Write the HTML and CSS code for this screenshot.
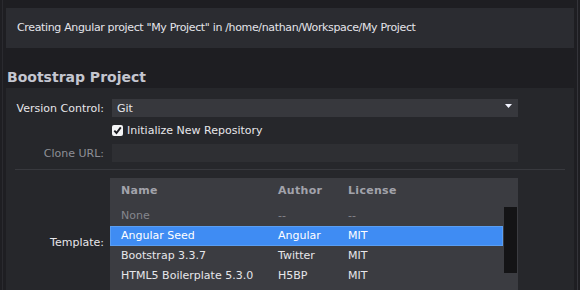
FILE: index.html
```html
<!DOCTYPE html>
<html lang="en">
<head>
    <meta charset="UTF-8">
    <title>New Project</title>
    <link rel="stylesheet" href="styles.css">
</head>
<body>
    <div class="window">
        <div class="banner">Creating Angular project "My Project" in /home/nathan/Workspace/My Project</div>

        <div class="section-title">Bootstrap Project</div>

        <div class="panel">
            <div class="form-row">
                <label class="form-label">Version Control:</label>
                <div class="select">
                    <span>Git</span>
                    <svg class="select-arrow" width="7" height="4" viewBox="0 0 7 4"><path d="M0 0h7L3.5 4z" fill="#f2f4ff"/></svg>
                </div>
            </div>

            <div class="form-row check-row">
                <span></span>
                <label class="check">
                    <svg class="check-box" width="11" height="11" viewBox="0 0 11 11">
                        <rect x="0" y="0" width="11" height="11" rx="2" fill="#f4f4f6"/>
                        <path d="M2.3 5.6l2.2 2.4 4.3-5.6" fill="none" stroke="#1d1d22" stroke-width="1.9"/>
                    </svg>
                    Initialize New Repository
                </label>
            </div>

            <div class="form-row">
                <label class="form-label disabled">Clone URL:</label>
                <div class="input"></div>
            </div>

            <div class="divider"></div>

            <div class="form-row template-row">
                <label class="form-label">Template:</label>
                <div class="table">
                    <div class="table-row table-head">
                        <span>Name</span><span>Author</span><span>License</span>
                    </div>
                    <div class="table-row muted">
                        <span>None</span><span>--</span><span>--</span>
                    </div>
                    <div class="table-row selected">
                        <span>Angular Seed</span><span>Angular</span><span>MIT</span>
                    </div>
                    <div class="table-row">
                        <span>Bootstrap 3.3.7</span><span>Twitter</span><span>MIT</span>
                    </div>
                    <div class="table-row">
                        <span>HTML5 Boilerplate 5.3.0</span><span>H5BP</span><span>MIT</span>
                    </div>
                    <div class="scrollbar"></div>
                </div>
            </div>
        </div>
    </div>
</body>
</html>
```

FILE: styles.css
```css
* {
    margin: 0;
    padding: 0;
    box-sizing: border-box;
}
body {
    background: #1e1e22;
    color: #e6e6ea;
    font-family: 'DejaVu Sans', sans-serif;
    font-size: 11px;
    height: 290px;
    overflow: hidden;
}
.window {
    margin: 0 2px;
    border-left: 1px solid #2a2a2f;
    border-right: 1px solid #34343a;
    height: 100%;
    padding: 8px 3px 0 3px;
}
.banner {
    background: #2b2c31;
    height: 40px;
    line-height: 40px;
    padding-left: 11px;
    color: #e4e4ea;
    letter-spacing: -0.35px;
}
.section-title {
    margin-top: 20px;
    padding-left: 1px;
    font-size: 14px;
    font-weight: bold;
    color: #c4c6d0;
    line-height: 18px;
}
.panel {
    background: #26272b;
    margin-top: 2px;
    padding-top: 11px;
    height: 220px;
}
.form-row {
    display: grid;
    grid-template-columns: 98px 406px;
    column-gap: 8px;
    align-items: center;
    margin-bottom: 7px;
}
.form-label {
    text-align: right;
    color: #e6e6ea;
}
.form-label.disabled {
    color: #8e8f96;
}
.select {
    height: 18px;
    background: #37383d;
    display: flex;
    align-items: center;
    justify-content: space-between;
    padding: 0 6px 0 5px;
}
.select-arrow {
    margin-top: -4px;
}
.check {
    display: flex;
    align-items: center;
    gap: 4px;
    height: 13px;
}
.input {
    height: 18px;
    background: #2e2f33;
}
.divider {
    height: 1px;
    background: #38393e;
    margin: 0 9px 8px 9px;
}
.template-row {
    grid-template-columns: 98px 408px;
    column-gap: 6px;
}
.table {
    position: relative;
    background: #3b3c41;
    height: 128px;
}
.table-row {
    display: grid;
    grid-template-columns: 157px 70px 1fr;
    padding-left: 11px;
    height: 20px;
    line-height: 20px;
    margin-right: 15px;
}
.table-head {
    height: 28px;
    line-height: 26px;
    font-weight: bold;
    color: #a2a3ab;
    letter-spacing: 0.3px;
}
.muted {
    color: #85868d;
}
.selected {
    background: #3f8cf3;
    color: #ffffff;
    box-shadow: inset 0 0 0 1px #5a9ef2;
}
.scrollbar {
    position: absolute;
    right: 1px;
    top: 29px;
    width: 13px;
    height: 66px;
    background: #141416;
}
```
